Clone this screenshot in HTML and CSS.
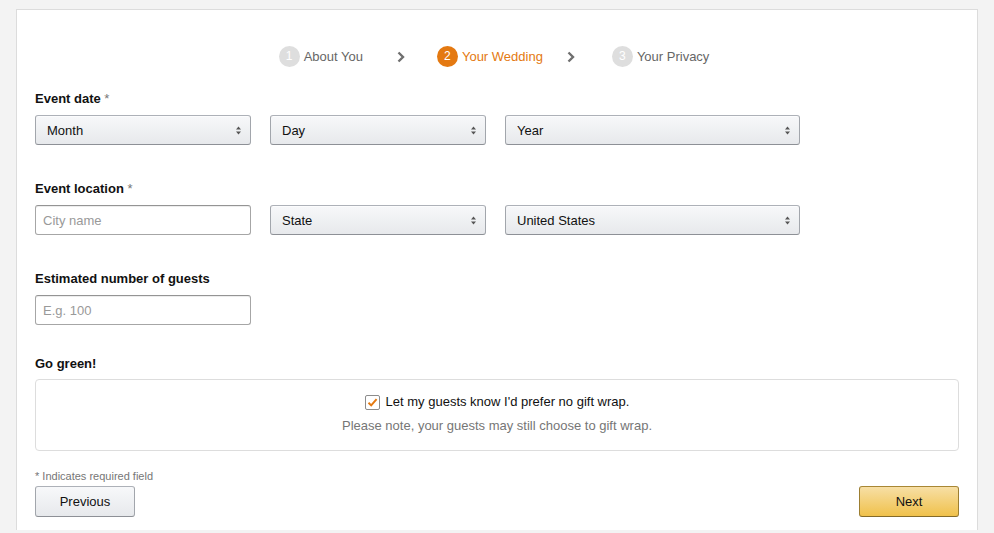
FILE: index.html
```
<!DOCTYPE html>
<html>
<head>
<meta charset="utf-8">
<title>Your Wedding</title>
<link rel="stylesheet" href="styles.css">
</head>
<body>
<div class="card">
  <div class="steps">
    <div class="step"><span class="num">1</span>About You</div>
    <svg class="chev first" width="8" height="12" viewBox="0 0 8 12"><path d="M1.5 1.5 L6 6 L1.5 10.5" fill="none" stroke="#6f6f6f" stroke-width="2.4"/></svg>
    <div class="step active"><span class="num">2</span>Your Wedding</div>
    <svg class="chev second" width="8" height="12" viewBox="0 0 8 12"><path d="M1.5 1.5 L6 6 L1.5 10.5" fill="none" stroke="#6f6f6f" stroke-width="2.4"/></svg>
    <div class="step"><span class="num">3</span>Your Privacy</div>
  </div>

  <div class="group">
    <div class="label">Event date <span class="req">*</span></div>
    <div class="row">
      <div class="sel small"><select><option>Month</option></select><svg class="arr" width="5" height="9" viewBox="0 0 5 9"><path d="M0 3.5 L2.5 0.5 L5 3.5 Z M0 5.5 L2.5 8.5 L5 5.5 Z" fill="#555"/></svg></div>
      <div class="sel small"><select><option>Day</option></select><svg class="arr" width="5" height="9" viewBox="0 0 5 9"><path d="M0 3.5 L2.5 0.5 L5 3.5 Z M0 5.5 L2.5 8.5 L5 5.5 Z" fill="#555"/></svg></div>
      <div class="sel wide"><select><option>Year</option></select><svg class="arr" width="5" height="9" viewBox="0 0 5 9"><path d="M0 3.5 L2.5 0.5 L5 3.5 Z M0 5.5 L2.5 8.5 L5 5.5 Z" fill="#555"/></svg></div>
    </div>
  </div>

  <div class="group">
    <div class="label">Event location <span class="req">*</span></div>
    <div class="row">
      <input class="txt" type="text" placeholder="City name">
      <div class="sel small"><select><option>State</option></select><svg class="arr" width="5" height="9" viewBox="0 0 5 9"><path d="M0 3.5 L2.5 0.5 L5 3.5 Z M0 5.5 L2.5 8.5 L5 5.5 Z" fill="#555"/></svg></div>
      <div class="sel wide"><select><option>United States</option></select><svg class="arr" width="5" height="9" viewBox="0 0 5 9"><path d="M0 3.5 L2.5 0.5 L5 3.5 Z M0 5.5 L2.5 8.5 L5 5.5 Z" fill="#555"/></svg></div>
    </div>
  </div>

  <div class="group last">
    <div class="label">Estimated number of guests</div>
    <div class="row">
      <input class="txt" type="text" placeholder="E.g. 100">
    </div>
  </div>

  <div class="label green-label">Go green!</div>
  <div class="green">
    <label class="check">
      <span class="box"><svg width="13" height="13" viewBox="0 0 13 13"><path d="M2.5 6.8 L5.2 9.4 L10.6 3.2" fill="none" stroke="#e47911" stroke-width="2"/></svg></span>
      Let my guests know I'd prefer no gift wrap.
    </label>
    <div class="note">Please note, your guests may still choose to gift wrap.</div>
  </div>

  <div class="required">* Indicates required field</div>
  <div class="actions">
    <button class="btn" type="button">Previous</button>
    <button class="btn primary" type="button">Next</button>
  </div>
</div>
</body>
</html>
```

FILE: styles.css
```
html, body {
    margin: 0;
    padding: 0;
}

body {
    background: #f3f3f3;
    font-family: "Liberation Sans", Arial, sans-serif;
    font-size: 13px;
    color: #111;
    padding-top: 9px;
}

.card {
    margin: 0 16px;
    background: #fff;
    border: 1px solid #dcdcdc;
    border-bottom: 0;
    padding: 36px 18px 14px;
    height: 521px;
    box-sizing: border-box;
}

.steps {
    display: flex;
    justify-content: center;
    align-items: center;
    height: 21px;
    margin-bottom: 24px;
    padding-right: 6px;
}
.step {
    display: flex;
    align-items: center;
    color: #666;
    font-size: 13px;
}
.step .num {
    width: 21px;
    height: 21px;
    border-radius: 50%;
    background: #dedede;
    color: #fff;
    font-size: 12px;
    line-height: 21px;
    text-align: center;
    margin-right: 4px;
}
.step.active {
    color: #e47911;
}
.step.active .num {
    background: #e47911;
}
.chev.first {
    margin: 0 32px 0 34px;
}
.chev.second {
    margin: 0 37px 0 24px;
}

.group {
    margin-bottom: 36px;
}
.group.last {
    margin-bottom: 31px;
}

.label {
    font-weight: bold;
    line-height: 16px;
    margin-bottom: 8px;
    color: #111;
}
.label .req {
    font-weight: normal;
    color: #777;
}

.row {
    display: flex;
    gap: 19px;
}

.sel {
    position: relative;
    height: 30px;
}
.sel.small {
    width: 216px;
}
.sel.wide {
    width: 295px;
}
.sel select {
    appearance: none;
    -webkit-appearance: none;
    width: 100%;
    height: 30px;
    margin: 0;
    padding: 0 20px 0 11px;
    border: 1px solid #adb1b8;
    border-color: #adb1b8 #a2a6ac #8d9096;
    border-radius: 3px;
    background: linear-gradient(to bottom, #f7f8fa, #e7e9ec);
    box-shadow: 0 1px 0 rgba(255,255,255,.6) inset;
    font-family: "Liberation Sans", Arial, sans-serif;
    font-size: 13px;
    color: #111;
}
.sel .arr {
    position: absolute;
    right: 10px;
    top: 11px;
    pointer-events: none;
}

.txt {
    width: 216px;
    height: 30px;
    box-sizing: border-box;
    margin: 0;
    padding: 0 7px;
    border: 1px solid #a6a6a6;
    border-top-color: #949494;
    border-radius: 3px;
    box-shadow: 0 1px 0 rgba(255,255,255,.5), 0 1px 0 rgba(0,0,0,.07) inset;
    font-family: "Liberation Sans", Arial, sans-serif;
    font-size: 13px;
}
.txt::placeholder {
    color: #999;
}

.green-label {
    margin-bottom: 7px;
}
.green {
    border: 1px solid #ddd;
    border-radius: 4px;
    height: 72px;
    box-sizing: border-box;
    padding-top: 13px;
    text-align: center;
}
.check {
    display: inline-flex;
    align-items: center;
    line-height: 18px;
    color: #111;
}
.check .box {
    width: 13px;
    height: 13px;
    border: 1px solid #8c8c8c;
    border-radius: 2px;
    background: #fff;
    margin-right: 6px;
    display: flex;
}
.note {
    color: #767676;
    line-height: 18px;
    margin-top: 5px;
}

.required {
    font-size: 11px;
    color: #767676;
    line-height: 14px;
    margin-top: 18px;
    margin-bottom: 3px;
}

.actions {
    display: flex;
    justify-content: space-between;
}
.btn {
    width: 100px;
    height: 31px;
    border: 1px solid #adb1b8;
    border-color: #adb1b8 #a2a6ac #8d9096;
    border-radius: 3px;
    background: linear-gradient(to bottom, #f7f8fa, #e7e9ec);
    font-family: "Liberation Sans", Arial, sans-serif;
    font-size: 13px;
    color: #111;
    cursor: pointer;
}
.btn.primary {
    border-color: #a88734 #9c7e31 #846a29;
    background: linear-gradient(to bottom, #f7dfa5, #f0c14b);
}
```
